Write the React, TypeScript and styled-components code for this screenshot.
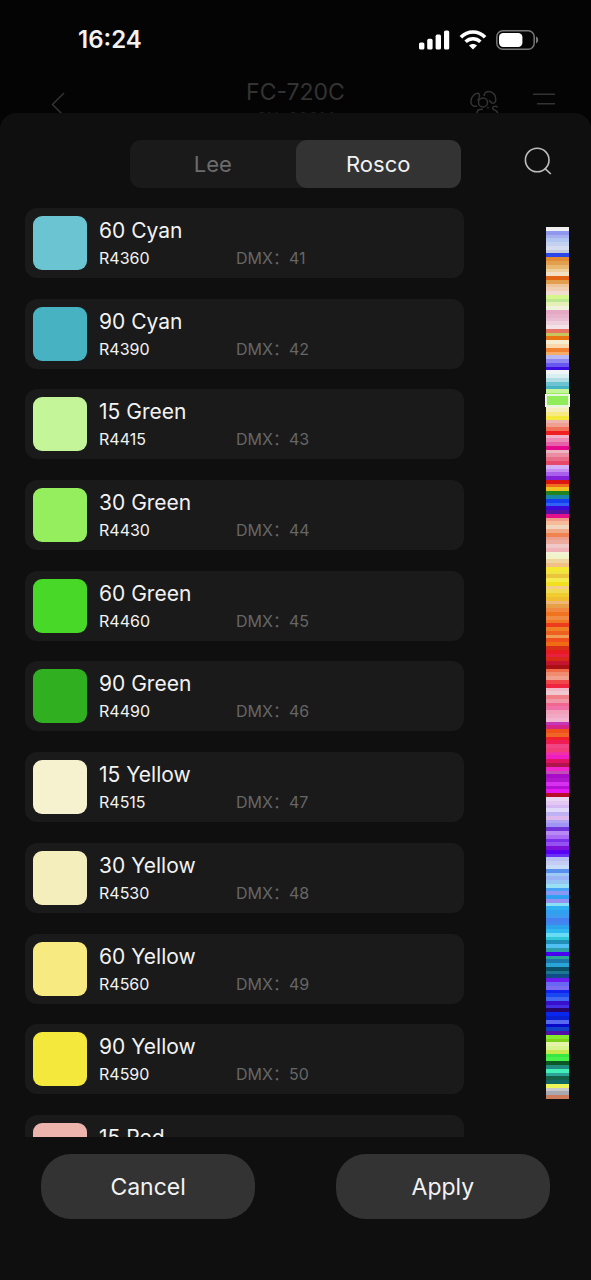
import React, { useState } from "react";
import styled, { createGlobalStyle } from "styled-components";

const GlobalStyle = createGlobalStyle`
  *, *::before, *::after { box-sizing: border-box; }
  body {
    margin: 0;
    background: #040404;
    color: #f2f2f2;
    font-family: Inter, "Noto Sans CJK SC", sans-serif;
  }
  button, input { font: inherit; color: inherit; }
`;

const Page = styled.div`
  display: flex;
  flex-direction: column;
  height: 100vh;
  overflow: hidden;
`;

const Backdrop = styled.div`
  flex: none;
  height: 113px;
  overflow: hidden;
`;

const StatusBar = styled.div`
  display: flex;
  justify-content: space-between;
  align-items: center;
  height: 78px;
  padding: 2px 52px 0 78px;
`;

const Clock = styled.time`
  font-size: 24px;
  line-height: 28px;
  font-weight: 600;
`;

const StatusIcons = styled.div`
  display: flex;
  align-items: center;
  gap: 9px;
`;

const AppBar = styled.header`
  display: grid;
  grid-template-columns: 1fr auto 1fr;
  align-items: start;
  color: #333;
`;

const BarButton = styled.button`
  display: flex;
  padding: 0;
  border: 0;
  background: none;
  cursor: pointer;
`;

const BackButton = styled(BarButton)`
  justify-self: start;
  margin: 14px 0 0 51px;
`;

const Device = styled.div`
  text-align: center;
`;

const DeviceName = styled.h1`
  margin: 0;
  font-size: 23px;
  line-height: 28px;
  font-weight: 400;
`;

const DeviceSerial = styled.div`
  padding-top: 2px;
  font-size: 16px;
  line-height: 20px;
  color: #1c1c1c;
`;

const BarActions = styled.div`
  display: flex;
  justify-content: flex-end;
  gap: 32px;
  padding: 12px 35px 0 0;
`;

const Sheet = styled.main`
  display: flex;
  flex-direction: column;
  flex: 1;
  min-height: 0;
  border-radius: 16px 16px 0 0;
  background: #0f0f0f;
`;

const SheetHeader = styled.div`
  display: grid;
  grid-template-columns: 1fr 56% 1fr;
  align-items: start;
  padding-top: 27px;
`;

const Tabs = styled.div`
  display: flex;
  grid-column: 2;
  height: 48px;
  border-radius: 11px;
  background: #1a1a1a;
`;

const Tab = styled.button<{ $active: boolean }>`
  flex: 1;
  border: 0;
  border-radius: 11px;
  background: ${(p) => (p.$active ? "#333" : "transparent")};
  color: ${(p) => (p.$active ? "#f2f2f2" : "#6c6c6c")};
  font-size: 22px;
  line-height: 28px;
  cursor: pointer;
`;

const SearchButton = styled(BarButton)`
  justify-self: end;
  margin: 7px 38px 0 0;
  color: #bdbdbd;
`;

const Body = styled.div`
  display: flex;
  flex: 1;
  min-height: 0;
  gap: 81px;
  margin-top: 20px;
  padding: 0 21px 0 25px;
`;

const ListView = styled.div`
  flex: 1;
  overflow: hidden;
`;

const List = styled.ul`
  display: flex;
  flex-direction: column;
  justify-content: space-between;
  height: 977px;
  margin: 0;
  padding: 0;
  list-style: none;
`;

const Row = styled.li`
  display: flex;
  align-items: center;
  gap: 12px;
  height: 70px;
  padding: 0 8px;
  border-radius: 12px;
  background: #1a1a1a;
`;

const Swatch = styled.span<{ $color: string }>`
  flex: none;
  width: 54px;
  height: 54px;
  border-radius: 9px;
  background: ${(p) => p.$color};
`;

const RowText = styled.div`
  display: grid;
  grid-template-columns: 137px 1fr;
  flex: 1;
`;

const ColorName = styled.span`
  grid-column: 1 / -1;
  font-size: 21px;
  line-height: 30px;
`;

const Code = styled.span`
  font-size: 16px;
  line-height: 24px;
`;

const Dmx = styled(Code)`
  color: #666;
`;

const Spectrum = styled.input<{ $bands: string }>`
  flex: none;
  width: 25px;
  margin: 19px 0 38px;
  border: solid transparent;
  border-width: 0 1px;
  appearance: none;
  writing-mode: vertical-lr;
  background: linear-gradient(to bottom, ${(p) => p.$bands}) padding-box;
  cursor: pointer;

  &::-webkit-slider-runnable-track {
    width: 25px;
    margin: 0 -1px;
    background: none;
  }

  &::-webkit-slider-thumb {
    appearance: none;
    width: 25px;
    height: 13px;
    border: 2px solid #e8f4e0;
    border-radius: 0;
    background: #90ec58;
  }
`;

const Footer = styled.footer`
  display: flex;
  justify-content: space-between;
  padding: 17px 7% 61px;
`;

const ActionButton = styled.button`
  width: 42%;
  height: 65px;
  border: 0;
  border-radius: 30px;
  background: #333;
  font-size: 23px;
  line-height: 32px;
  cursor: pointer;
`;

const colors = [
  { name: "60 Cyan", code: "R4360", dmx: 41, color: "#6ac4d2" },
  { name: "90 Cyan", code: "R4390", dmx: 42, color: "#46b2c2" },
  { name: "15 Green", code: "R4415", dmx: 43, color: "#c4f598" },
  { name: "30 Green", code: "R4430", dmx: 44, color: "#94ee5e" },
  { name: "60 Green", code: "R4460", dmx: 45, color: "#48d828" },
  { name: "90 Green", code: "R4490", dmx: 46, color: "#30b020" },
  { name: "15 Yellow", code: "R4515", dmx: 47, color: "#f6f2d0" },
  { name: "30 Yellow", code: "R4530", dmx: 48, color: "#f4eebc" },
  { name: "60 Yellow", code: "R4560", dmx: 49, color: "#f6ea80" },
  { name: "90 Yellow", code: "R4590", dmx: 50, color: "#f4e83c" },
  { name: "15 Red", code: "R4615", dmx: 51, color: "#ecb4ac" },
];

// One band per filter in the catalogue, top to bottom.
const bandColors = `
eeeeee 8f98ee a6b0ee b0c6f0 c4d0f0 d6dcf0 c4cade 2a48ea e08a34 e2a04e
e8b870 f0cf9e f2dfc4 e06414 e2a04e f0c49a f0cfb4 f2dcd0 d4f68a bce690
e4f0b8 f0f2dc e4a8c4 e6b2cc eabcd2 ecd0dc f2e2e8 e87464 c8c45e e87412
f6ecd0 f8d8ac f08232 f4ac68 b8b8f4 9088f0 6858f0 3c0ce0 f0f4f4 d8eef0
b0dce4 6cc4d2 46b2c2 c4f598 96ee5e 48d828 30b020 f6f2d0 f4eebc f6ea80
f4e83c ecb4ac f0a090 f07058 f02020 f0b0c8 ec8cb4 e860a8 e40a8c ecb4c0
ec8ca0 e86c88 e84868 d4b0f4 c48cf0 a860ec 8420d8 dc1414 f06c1c f0c020
208420 1c86a8 1440f0 3060f4 3c08d8 5414a4 e4108c f09c88 f4bc98 f0d4bc
f0aa88 f08450 eca090 ecaca0 f0c8c8 f0b4b8 f2f2d4 f0f2c8 f0d4a0 f0c088
f4e832 f2e440 ecc43c f4ec4c f0e020 f4cc88 f0dc54 f0cc30 f0bc30 f0b878
e8a048 f08840 f07420 f08c44 f07824 ec3c1c f08024 ec6020 f09c54 f0501c
f06c14 d83018 e81c20 e82040 d82818 c41430 a81014 f06c48 f08c70 f0a08c
f04848 f02440 f0b8c8 f0c8d0 f08088 f098a8 f06890 f070a8 f0a0b8 f0a8c4
f0b4d0 c438b8 d42488 f0501c f06424 f0202c f01c54 f04484 f03c78 f030a4
f01cc4 e01460 b0144c f028cc c44cb8 a80cc8 b014cc d830f0 b410d4 e818f0
b80c28 e8d8f4 e4c8f4 d4b8f4 e0d8f8 c0b0f4 dcb8ec b0a4f0 a094f4 7034d8
b888f4 a86cf4 7c30ec 9450f0 7c10d8 5800f4 6830f4 b8c0f4 c4ccf4 c8dcf8
5890ec a0c8f4 98b4f4 98c4f4 98e0f4 48a0f4 8898f4 30a0f0 9890f0 88e0f4
30b0f0 30a0f0 3c9cf0 4480f0 4088f0 2ca4ec 30b8f0 68dcf4 30c8d8 2090b8
50c0f4 2c9ca8 4800f0 28a498 1c78a8 28a4d8 0c5068 1c7890 104c88 6c1cf0
6868f4 7c6cf0 1424f0 1848f0 4068f0 3810cc 4430e4 280468 0828f0 0820d0
5868f0 0808c8 1040c8 5010a8 84e82c 7cd01c e4f4a8 d8f490 c8e850 38e840
48f04c 0c5824 208c80 40f0b8 2ca498 146048 106860 ecf458 c8c8cc a8a8b0
cc7c5c
`
  .trim()
  .split(/\s+/);

const bands = bandColors
  .map((hex, i) => {
    const at = (n: number) => `${((n * 100) / bandColors.length).toFixed(3)}%`;
    return `#${hex} ${at(i)} ${at(i + 1)}`;
  })
  .join(", ");

const SignalIcon = () => (
  <svg width="31" height="20" viewBox="0 0 31 20" fill="#fff" aria-hidden="true">
    <rect x="0" y="12.4" width="5.4" height="7.2" rx="1.6" />
    <rect x="8.2" y="8.8" width="5.4" height="10.8" rx="1.6" />
    <rect x="16.6" y="4.6" width="5.4" height="15" rx="1.6" />
    <rect x="25" y="0.4" width="5.2" height="19.2" rx="1.6" />
  </svg>
);

const WifiIcon = () => (
  <svg width="28" height="20" viewBox="0 0 28 20" fill="none" stroke="#fff" aria-hidden="true">
    <path d="M1.9 7.2C8.7.2 19.3.2 26.1 7.2" strokeWidth="3.6" />
    <path d="M6.6 11.8c4.3-4 10.5-4 14.8 0" strokeWidth="3.5" />
    <path d="M14 19.6l-4-4.1c2.2-2 5.8-2 8 0z" fill="#fff" stroke="none" />
  </svg>
);

const BatteryIcon = () => (
  <svg width="43" height="20" viewBox="0 0 43 20" fill="none" aria-hidden="true">
    <rect x="0.8" y="0.8" width="37.4" height="18.4" rx="6" stroke="#777" strokeWidth="1.5" />
    <rect x="3" y="3" width="23.4" height="14" rx="4.2" fill="#fff" />
    <path d="M40 6.6c2.9 1 2.9 5.8 0 6.8z" fill="#777" />
  </svg>
);

const BackIcon = () => (
  <svg width="14" height="26" viewBox="0 0 14 26" fill="none" stroke="currentColor" strokeWidth="1.5" aria-hidden="true">
    <path d="M13 1L1.500 12.500 13 24" />
  </svg>
);

const FanIcon = () => (
  <svg width="31" height="28" viewBox="0 0 31 28" fill="none" stroke="currentColor" strokeWidth="1.5" aria-hidden="true">
    <circle cx="13" cy="12.4" r="4.5" />
    <path d="M7.500 10.500C9.500 8 10 5.500 8.800 3.500 6 2.300 1 6 .9 11.500c-.1 4 3 5.500 6.200 4.600" />
    <path d="M14.200 6C14 3.400 16 1.500 18.600 1.500c4.400 0 7.600 4 7.200 8.400-.2 2.600-2 4-3.800 3.200-1.400-.6-1.800-2-3-2.800" />
    <path d="M7 23c0-2.800 2-4 6-3.600" />
    <path d="M18 17v1.500M27.600 17.400c-1-1.600-5-1.400-5 .8 0 2.200 5 1.600 5 4.800" />
  </svg>
);

const MenuIcon = () => (
  <svg width="23" height="15" viewBox="0 0 23 15" fill="none" stroke="currentColor" strokeWidth="1.6" aria-hidden="true">
    <path d="M0 4.300h22M4 13.800h18" />
  </svg>
);

const SearchIcon = () => (
  <svg width="29" height="29" viewBox="0 0 29 29" fill="none" stroke="currentColor" strokeWidth="1.6" aria-hidden="true">
    <circle cx="13.200" cy="13" r="11.800" />
    <path d="M20.800 21.300L26.800 27" />
  </svg>
);

const libraries = ["Lee", "Rosco"];

export default function App() {
  const [library, setLibrary] = useState("Rosco");
  const [position, setPosition] = useState(194);

  return (
    <Page>
      <GlobalStyle />
      <Backdrop>
        <StatusBar>
          <Clock>16:24</Clock>
          <StatusIcons>
            <SignalIcon />
            <WifiIcon />
            <BatteryIcon />
          </StatusIcons>
        </StatusBar>
        <AppBar>
          <BackButton aria-label="Back">
            <BackIcon />
          </BackButton>
          <Device>
            <DeviceName>FC-720C</DeviceName>
            <DeviceSerial>SN: 0061.1</DeviceSerial>
          </Device>
          <BarActions>
            <BarButton aria-label="Fan mode">
              <FanIcon />
            </BarButton>
            <BarButton aria-label="Menu">
              <MenuIcon />
            </BarButton>
          </BarActions>
        </AppBar>
      </Backdrop>

      <Sheet>
        <SheetHeader>
          <Tabs role="tablist">
            {libraries.map((name) => (
              <Tab
                key={name}
                role="tab"
                aria-selected={library === name}
                $active={library === name}
                onClick={() => setLibrary(name)}
              >
                {name}
              </Tab>
            ))}
          </Tabs>
          <SearchButton aria-label="Search">
            <SearchIcon />
          </SearchButton>
        </SheetHeader>

        <Body>
          <ListView>
            <List>
              {colors.map((c) => (
                <Row key={c.code}>
                  <Swatch $color={c.color} />
                  <RowText>
                    <ColorName>{c.name}</ColorName>
                    <Code>{c.code}</Code>
                    <Dmx>DMX：{c.dmx}</Dmx>
                  </RowText>
                </Row>
              ))}
            </List>
          </ListView>
          <Spectrum
            type="range"
            aria-label="Catalogue position"
            min={0}
            max={1000}
            value={position}
            onChange={(e) => setPosition(Number(e.target.value))}
            $bands={bands}
          />
        </Body>

        <Footer>
          <ActionButton>Cancel</ActionButton>
          <ActionButton>Apply</ActionButton>
        </Footer>
      </Sheet>
    </Page>
  );
}
